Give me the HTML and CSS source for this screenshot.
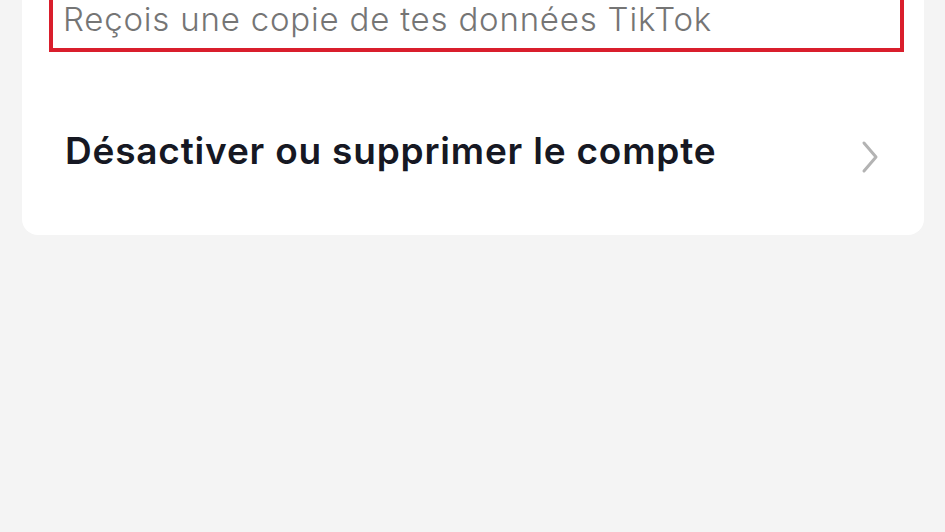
FILE: index.html
```html
<!DOCTYPE html>
<html lang="fr">
<head>
  <meta charset="UTF-8" />
  <meta name="viewport" content="width=device-width, initial-scale=1.0"/>
  <title>Compte - TikTok</title>
  <link rel="stylesheet" href="styles.css">
</head>
<body>
  <div class="card">
    <div class="highlight">
      <p class="sub">Reçois une copie de tes données TikTok</p>
    </div>

    <a class="row" href="#">
      <span class="label">Désactiver ou supprimer le compte</span>
      <svg class="chevron" width="20" height="34" viewBox="0 0 20 34">
        <path d="M4 3 L16 17 L4 31" fill="none" stroke="#b3b3b3" stroke-width="3" stroke-linecap="round" stroke-linejoin="round"/>
      </svg>
    </a>
  </div>
</body>
</html>
```

FILE: styles.css
```css
body {
  margin: 0;
  font-family: 'Inter', sans-serif;
  background: #f4f4f4;
  color: #161823;
}

.card {
  background: #fff;
  margin: -40px 21px 0 22px;
  padding: 0 0 0 27px;
  border-radius: 0 0 16px 16px;
}

.highlight {
  border: 4px solid #d91e2c;
  margin-right: 20px;
  height: 92px;
  box-sizing: border-box;
  padding: 0 0 0 10px;
  display: flex;
  align-items: flex-end;
}

.sub {
  margin: 0 0 9px;
  font-size: 33px;
  font-weight: 300;
  color: #757575;
  letter-spacing: 0.8px;
}

.row {
  display: flex;
  align-items: center;
  justify-content: space-between;
  text-decoration: none;
  color: inherit;
  box-sizing: border-box;
  height: 183px;
  padding: 24px 44px 10px 16px;
}

.label {
  font-size: 37px;
  font-weight: 600;
  letter-spacing: 0.8px;
}

.chevron {
  margin-top: 12px;
}
```
